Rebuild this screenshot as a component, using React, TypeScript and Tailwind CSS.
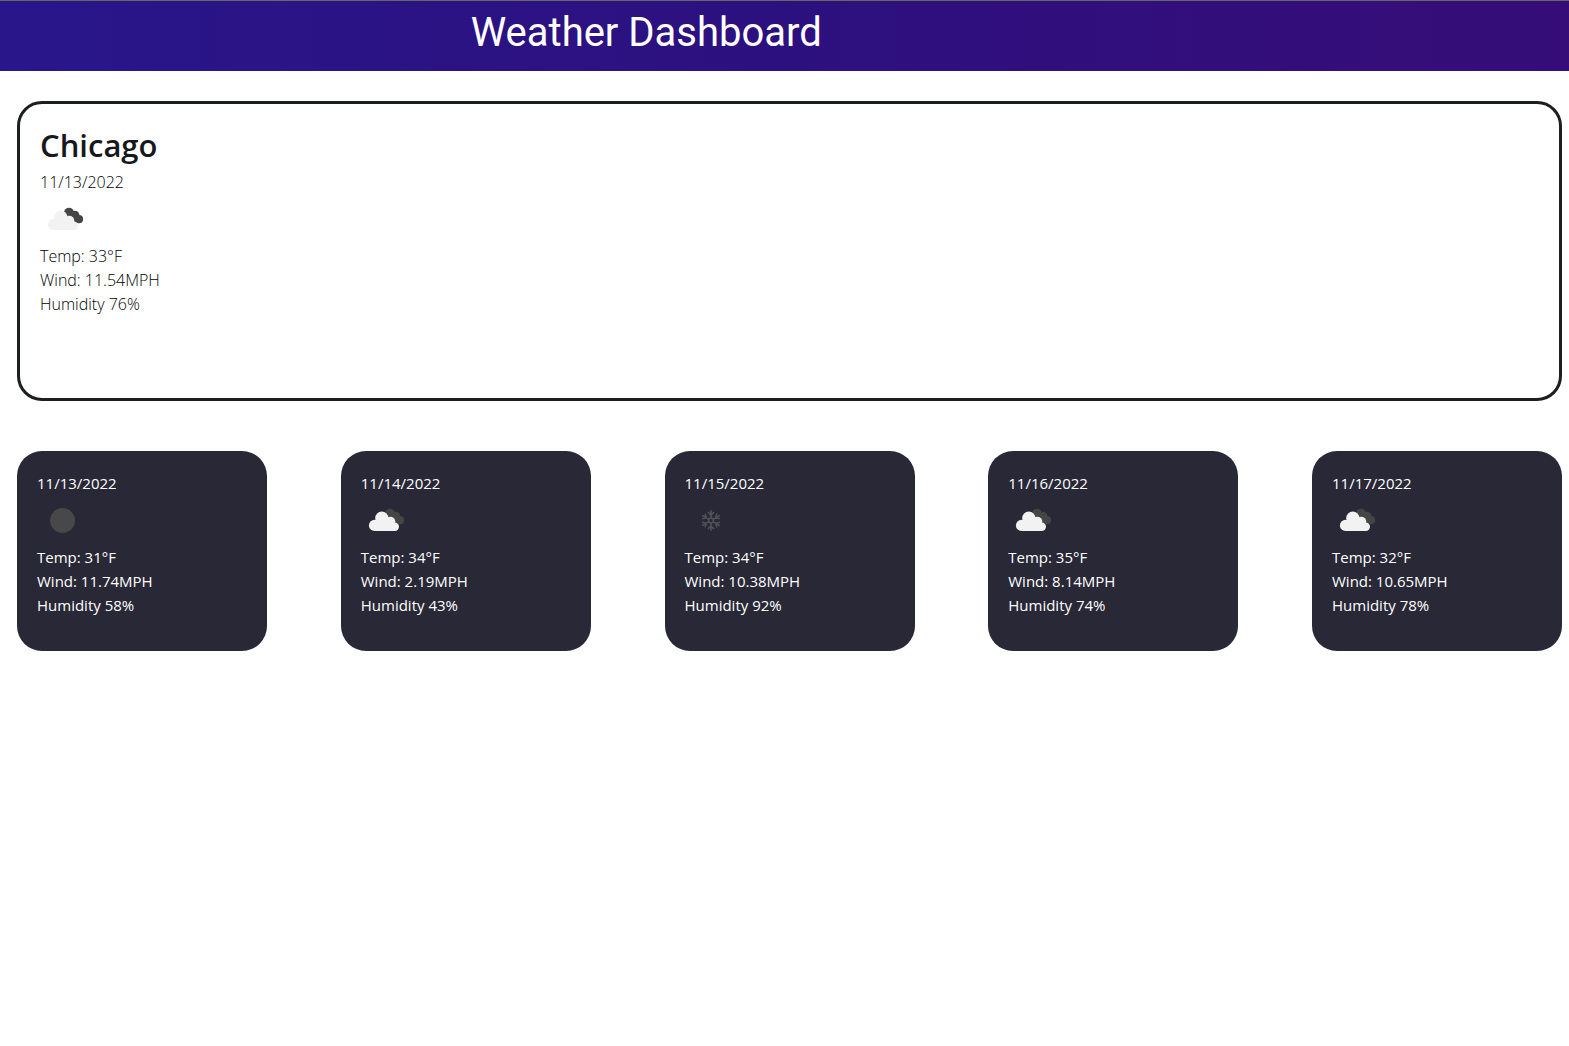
type IconKind = "clouds" | "moon" | "snow";

interface Reading {
  date: string;
  icon: IconKind;
  temp: string;
  wind: string;
  humidity: string;
}

const today: Reading = { date: "11/13/2022", icon: "clouds", temp: "33", wind: "11.54", humidity: "76" };

const forecast: Reading[] = [
  { date: "11/13/2022", icon: "moon", temp: "31", wind: "11.74", humidity: "58" },
  { date: "11/14/2022", icon: "clouds", temp: "34", wind: "2.19", humidity: "43" },
  { date: "11/15/2022", icon: "snow", temp: "34", wind: "10.38", humidity: "92" },
  { date: "11/16/2022", icon: "clouds", temp: "35", wind: "8.14", humidity: "74" },
  { date: "11/17/2022", icon: "clouds", temp: "32", wind: "10.65", humidity: "78" },
];

function WeatherIcon({ kind }: { kind: IconKind }) {
  return (
    <svg viewBox="0 0 50 50" className="block size-[50px]" aria-hidden="true">
      {kind === "moon" && <circle cx="25.5" cy="25.5" r="12.5" fill="#48484a" />}
      {kind === "snow" && (
        <g fill="none" stroke="#525256" strokeWidth="1.6">
          {[0, 60, 120, 180, 240, 300].map((angle) => (
            <path
              key={angle}
              transform={`rotate(${angle} 26 25.5)`}
              d="M26 22.8V15.3M23 17l3 3 3-3M26 22.8l2.4 1.4"
            />
          ))}
        </g>
      )}
      {kind === "clouds" && (
        <>
          <g fill="#454545">
            <circle cx="29" cy="18.8" r="5.1" />
            <circle cx="35" cy="21.2" r="4.4" />
            <circle cx="39" cy="25.2" r="4.1" />
            <path d="M25 22l10 6h4l-3-10h-7Z" />
          </g>
          <g fill="#f2f2f2">
            <circle cx="20.8" cy="23.2" r="6.6" />
            <circle cx="13.5" cy="30.4" r="5.6" />
            <circle cx="29.4" cy="26.6" r="4.9" />
            <circle cx="33.8" cy="31.8" r="4.2" />
            <path d="M13.5 36h20.3v-6l-4-6h-12l-4 4Z" />
          </g>
        </>
      )}
    </svg>
  );
}

function Details({ reading }: { reading: Reading }) {
  return (
    <>
      <p>{reading.date}</p>
      <WeatherIcon kind={reading.icon} />
      <p>Temp: {reading.temp}°F</p>
      <p>Wind: {reading.wind}MPH</p>
      <p>Humidity {reading.humidity}%</p>
    </>
  );
}

export default function App() {
  return (
    <div className="min-h-screen bg-white font-['Open_Sans',sans-serif] leading-6 text-[#212529]">
      <header className="border-t border-[#666666] bg-linear-to-r from-[#28168a] via-[#2d107f] to-[#360d78] pt-2 pb-[14px] pl-[30%]">
        <h1 className="font-[Roboto,sans-serif] text-[40px] leading-[48px] text-white">Weather Dashboard</h1>
      </header>
      <main className="pt-[30px] pr-[7px] pl-[17px]">
        <section className="min-h-[300px] rounded-[25px] border-3 border-[#1c1e22] p-5 text-base leading-6 font-light text-black">
          <h2 className="mb-1 text-[31px] leading-[42px] font-semibold text-[#16181b]">Chicago</h2>
          <Details reading={today} />
        </section>
        <section className="mt-[50px] flex flex-wrap justify-between gap-y-6" aria-label="Five day forecast">
          {forecast.map((day) => (
            <article
              key={day.date}
              className="min-h-[200px] w-[250px] rounded-[25px] bg-[#292836] p-5 text-[15px] leading-6 text-white"
            >
              <Details reading={day} />
            </article>
          ))}
        </section>
      </main>
    </div>
  );
}
